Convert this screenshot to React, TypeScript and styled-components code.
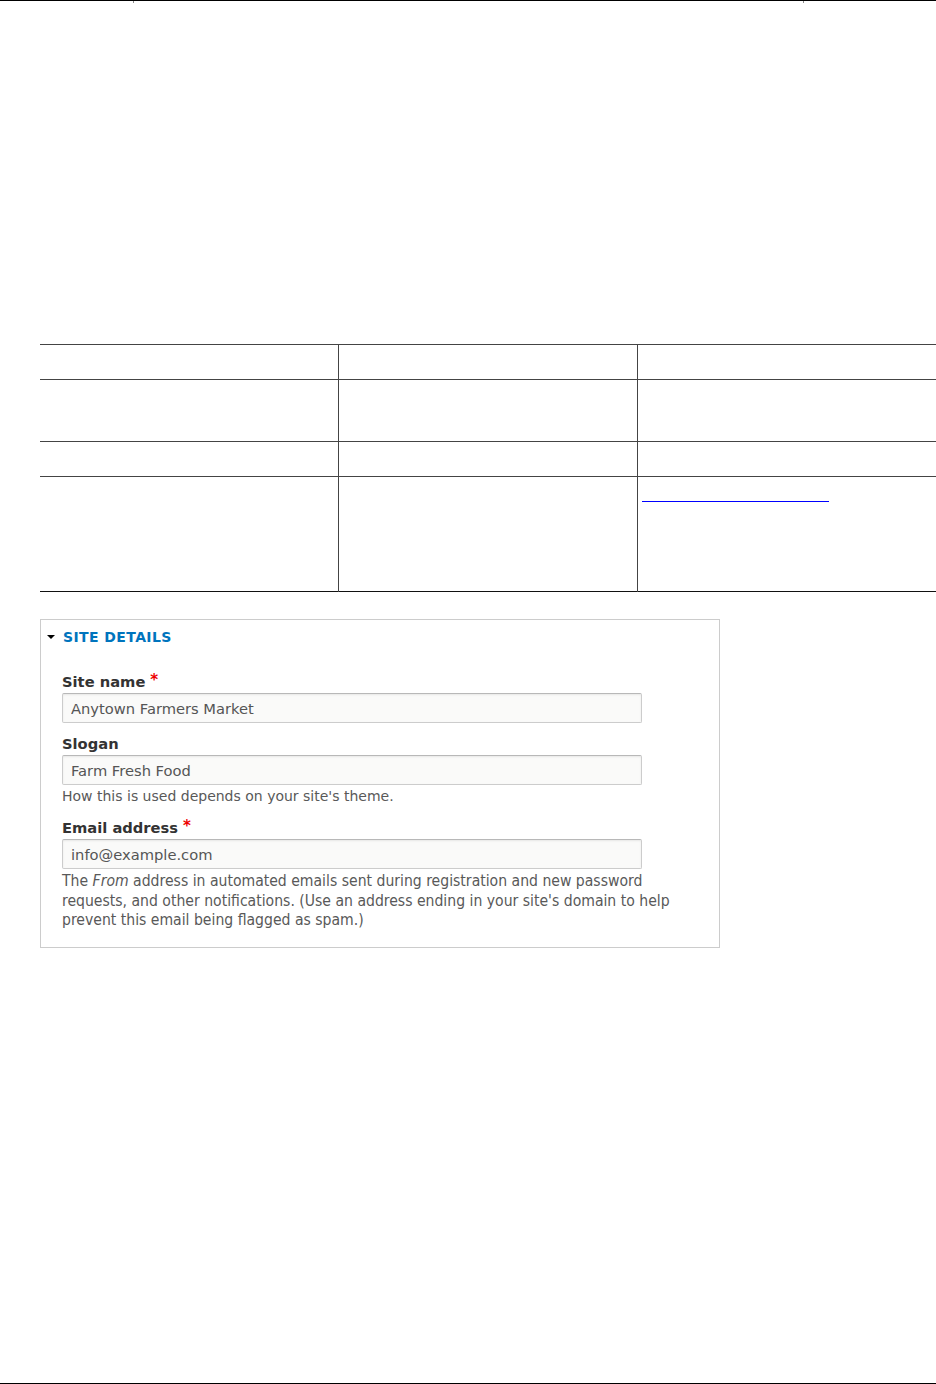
import styled, { createGlobalStyle } from "styled-components";

const GlobalStyle = createGlobalStyle`
  html, body {
    margin: 0;
    padding: 0;
    background: #fff;
  }
  body {
    font-family: "DejaVu Sans", "Liberation Sans", sans-serif;
    color: #333;
  }
`;

interface FieldProps {
  label: string;
  value: string;
  required?: boolean;
  help?: React.ReactNode;
  condensedHelp?: boolean;
}

function Field({ label, value, required, help, condensedHelp }: FieldProps) {
  return (
    <FormItem>
      <Label>
        {label}
        {required && <Required>*</Required>}
      </Label>
      <TextInput defaultValue={value} />
      {help && <Help condensed={condensedHelp}>{help}</Help>}
    </FormItem>
  );
}

export default function App() {
  // heights of the empty table rows, border excluded
  const rows = [
    { height: 34 },
    { height: 61 },
    { height: 34 },
    { height: 114, link: true },
  ];

  return (
    <Page>
      <GlobalStyle />
      <TopRule>
        <TopCell width={133} />
        <TopCell width={669} divided />
        <TopCell divided grow />
      </TopRule>

      <Table>
        <colgroup>
          <col style={{ width: 298 }} />
          <col style={{ width: 299 }} />
          <col style={{ width: 301 }} />
        </colgroup>
        <tbody>
          {rows.map((row, i) => (
            <Row key={i} last={i === rows.length - 1}>
              <Cell style={{ height: row.height }} />
              <Cell divided style={{ height: row.height }} />
              <Cell divided style={{ height: row.height }}>
                {row.link && <EmptyLink href="#" aria-label="link" />}
              </Cell>
            </Row>
          ))}
        </tbody>
      </Table>

      <Details>
        <Summary>
          <Caret />
          Site details
        </Summary>
        <DetailsBody>
          <Field label="Site name" value="Anytown Farmers Market" required />
          <Field
            label="Slogan"
            value="Farm Fresh Food"
            help="How this is used depends on your site's theme."
          />
          <Field
            label="Email address"
            value="info@example.com"
            required
            condensedHelp
            help={
              <>
                The <em>From</em> address in automated emails sent during
                registration and new password requests, and other
                notifications. (Use an address ending in your site's domain to
                help prevent this email being flagged as spam.)
              </>
            }
          />
        </DetailsBody>
      </Details>

      <BottomRule />
    </Page>
  );
}

const Page = styled.div`
  min-height: 1384px;
  display: flex;
  flex-direction: column;
  overflow: hidden;
`;

const TopRule = styled.div`
  display: flex;
  border-top: 1px solid #000;
  height: 2px;
`;

const TopCell = styled.div<{ width?: number; divided?: boolean; grow?: boolean }>`
  width: ${(p) => (p.width ? `${p.width}px` : "auto")};
  flex: ${(p) => (p.grow ? 1 : "none")};
  border-left: ${(p) => (p.divided ? "1px solid #888" : "none")};
`;

const Table = styled.table`
  margin: 341px 0 0 40px;
  width: 898px;
  border-collapse: collapse;
  table-layout: fixed;
`;

const Row = styled.tr<{ last?: boolean }>`
  border-top: 1px solid #444;
  border-bottom: 1px solid ${(p) => (p.last ? "#111" : "#444")};
`;

const Cell = styled.td<{ divided?: boolean }>`
  padding: 0;
  vertical-align: top;
  border-left: ${(p) => (p.divided ? "1px solid #444" : "none")};
`;

const EmptyLink = styled.a`
  display: block;
  margin: 24px 0 0 4px;
  width: 187px;
  height: 0;
  border-bottom: 1px solid #0000ff;
`;

const Details = styled.div`
  margin: 27px 0 0 40px;
  width: 678px;
  border: 1px solid #ccc;
  padding-bottom: 16px;
`;

const Summary = styled.div`
  display: flex;
  align-items: center;
  margin-top: 8px;
  padding-left: 6px;
  height: 17px;
  font-size: 14px;
  font-weight: bold;
  text-transform: uppercase;
  color: #0074bd;
  letter-spacing: 0.4px;
`;

const Caret = styled.span`
  width: 0;
  height: 0;
  margin-right: 8px;
  border-left: 4px solid transparent;
  border-right: 4px solid transparent;
  border-top: 4.5px solid #000;
`;

const DetailsBody = styled.div`
  padding: 26px 0 0 21px;
  display: flex;
  flex-direction: column;
  gap: 12px;
`;

const FormItem = styled.div`
  display: flex;
  flex-direction: column;
`;

const Label = styled.label`
  font-size: 14.7px;
  line-height: 18px;
  font-weight: bold;
  color: #333;
  margin-bottom: 2px;
`;

const Required = styled.span`
  color: #e00;
  margin-left: 5px;
  font-size: 15px;
  vertical-align: 2px;
`;

const TextInput = styled.input`
  box-sizing: border-box;
  width: 580px;
  height: 30px;
  padding: 0 8px;
  font-family: "DejaVu Sans", sans-serif;
  font-size: 14.7px;
  color: #555;
  background: #fafaf9;
  border: 1px solid #ccc;
  border-top-color: #b8b8b8;
  border-radius: 2px;
  box-shadow: inset 0 1px 2px rgba(0, 0, 0, 0.08);
  outline: none;
`;

const Help = styled.div<{ condensed?: boolean }>`
  margin-top: ${(p) => (p.condensed ? "3px" : "2px")};
  width: ${(p) => (p.condensed ? "625px" : "auto")};
  font-family: ${(p) =>
    p.condensed
      ? `"DejaVu Sans Condensed", "DejaVu Sans", sans-serif`
      : `"DejaVu Sans", sans-serif`};
  font-stretch: ${(p) => (p.condensed ? "condensed" : "normal")};
  font-size: ${(p) => (p.condensed ? "15.6px" : "14px")};
  line-height: ${(p) => (p.condensed ? "19.5px" : "18px")};
  color: #595959;
`;

const BottomRule = styled.div`
  margin-top: auto;
  border-bottom: 1px solid #000;
`;
